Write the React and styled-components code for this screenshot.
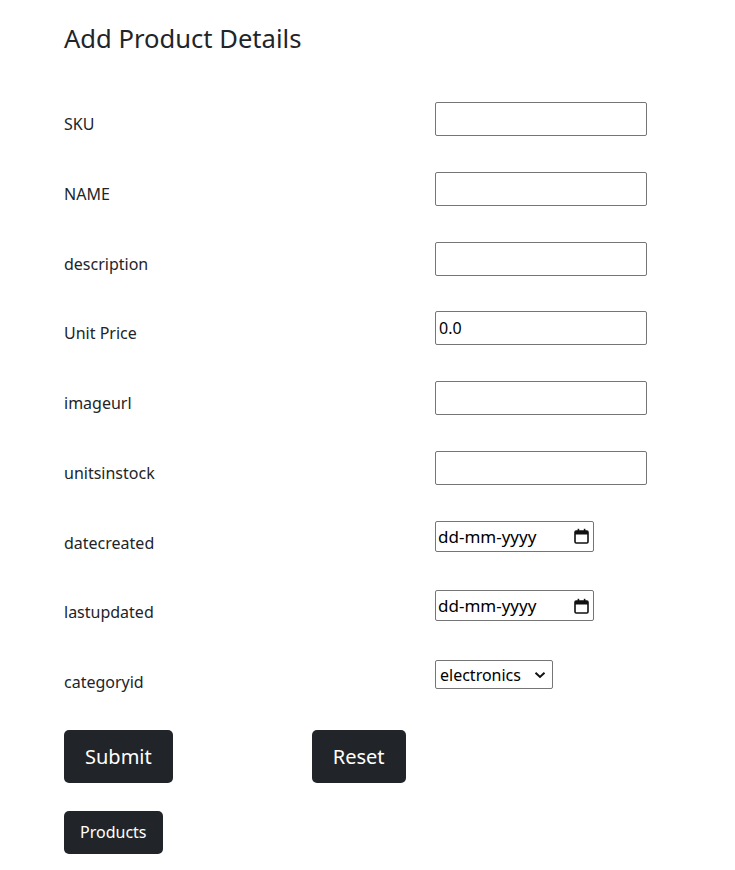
import React from 'react';
import styled, { createGlobalStyle } from 'styled-components';

const GlobalStyle = createGlobalStyle`
  body {
    margin: 0;
    background: #fff;
    color: #212529;
    font-family: "Noto Sans", "Open Sans", sans-serif;
  }
`;

const Page = styled.div`
  padding: 22px 0 16px 64px;
`;

const Title = styled.h3`
  margin: 0 0 46px;
  font-size: 25.6px;
  font-weight: 400;
  line-height: 34px;
`;

const FormRow = styled.div`
  display: grid;
  grid-template-columns: 371px auto;
  align-items: start;
  height: 69.75px;
`;

const Label = styled.label`
  padding-top: 10px;
  font-size: 16px;
  line-height: 24px;
`;

const Field = styled.input`
  box-sizing: border-box;
  width: ${(p) => (p.$narrow ? '159px' : '212px')};
  height: ${(p) => (p.$narrow ? '31px' : '34px')};
  margin: 0;
  padding: 0 3px;
  border: 1px solid #767676;
  border-radius: 2px;
  font-family: "Noto Sans", sans-serif;
  font-size: 16px;
  color: #000;
  background: #fff;
  outline: none;
`;

const FieldWrap = styled.div`
  position: relative;
  display: inline-block;
  width: fit-content;
`;

const DateField = styled(Field)`
  font-size: 17px;
  padding: 0 2px;
`;

const IconSlot = styled.span`
  position: absolute;
  top: 0;
  right: ${(p) => p.$right || '6px'};
  height: 100%;
  display: flex;
  align-items: center;
  pointer-events: none;
`;

const Select = styled.select`
  box-sizing: border-box;
  appearance: none;
  width: 118px;
  height: 29px;
  margin: 0;
  padding: 0 0 0 4px;
  border: 1px solid #767676;
  border-radius: 2px;
  background: #fff;
  color: #000;
  font-family: "Noto Sans", sans-serif;
  font-size: 16px;
`;

const ButtonRow = styled.div`
  display: flex;
  gap: ${(p) => p.$gap || '0'};
  margin-bottom: ${(p) => p.$mb || '0'};
`;

const Button = styled.button`
  box-sizing: border-box;
  height: ${(p) => (p.$large ? '53px' : '43px')};
  padding: ${(p) => (p.$large ? '0 21px' : '0 16px')};
  border: none;
  border-radius: 5px;
  background: #212529;
  color: #fff;
  font-family: "Noto Sans", sans-serif;
  font-size: ${(p) => (p.$large ? '20px' : '16px')};
  cursor: pointer;
`;

const CalendarIcon = () => (
  <svg width="15" height="16" viewBox="0 0 15 16">
    <rect x="1" y="3" width="13" height="12" rx="1.2" fill="none" stroke="#111" strokeWidth="1.6" />
    <rect x="1" y="3" width="13" height="3.5" fill="#111" />
    <rect x="3.6" y="0.8" width="1.6" height="3" fill="#111" />
    <rect x="9.8" y="0.8" width="1.6" height="3" fill="#111" />
  </svg>
);

const Chevron = () => (
  <svg width="12" height="8" viewBox="0 0 12 8">
    <path d="M1.5 1.8 L6 6 L10.5 1.8" fill="none" stroke="#111" strokeWidth="2" />
  </svg>
);

const fields = [
  { name: 'sku', label: 'SKU' },
  { name: 'name', label: 'NAME' },
  { name: 'description', label: 'description' },
  { name: 'unitPrice', label: 'Unit Price', value: '0.0' },
  { name: 'imageUrl', label: 'imageurl' },
  { name: 'unitsInStock', label: 'unitsinstock' },
];

const App = () => {
  return (
    <Page>
      <GlobalStyle />
      <Title>Add Product Details</Title>
      <form onSubmit={(e) => e.preventDefault()}>
        {fields.map((f) => (
          <FormRow key={f.name}>
            <Label htmlFor={f.name}>{f.label}</Label>
            <Field id={f.name} type="text" defaultValue={f.value || ''} />
          </FormRow>
        ))}
        {['datecreated', 'lastupdated'].map((d) => (
          <FormRow key={d}>
            <Label htmlFor={d}>{d}</Label>
            <FieldWrap>
              <DateField id={d} $narrow readOnly value="dd-mm-yyyy" />
              <IconSlot $right="5px">
                <CalendarIcon />
              </IconSlot>
            </FieldWrap>
          </FormRow>
        ))}
        <FormRow>
          <Label htmlFor="categoryid">categoryid</Label>
          <FieldWrap>
            <Select id="categoryid" defaultValue="electronics">
              <option value="electronics">electronics</option>
            </Select>
            <IconSlot $right="7px">
              <Chevron />
            </IconSlot>
          </FieldWrap>
        </FormRow>
        <ButtonRow $gap="139px" $mb="28px">
          <Button type="submit" $large>Submit</Button>
          <Button type="reset" $large>Reset</Button>
        </ButtonRow>
        <ButtonRow>
          <Button type="button">Products</Button>
        </ButtonRow>
      </form>
    </Page>
  );
};

export default App;
